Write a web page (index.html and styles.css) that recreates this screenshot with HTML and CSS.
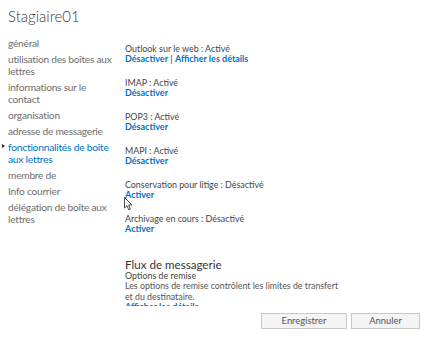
FILE: index.html
```html
<!DOCTYPE html>
<html lang="fr">
<head>
    <meta charset="UTF-8">
    <meta name="viewport" content="width=device-width, initial-scale=1.0">
    <title>Stagiaire01</title>
    <link rel="stylesheet" href="styles.css">
</head>
<body>

<div class="dialog">
    <!-- Header -->
    <h1 class="title">Stagiaire01</h1>

    <div class="main">
        <!-- Left navigation -->
        <ul class="nav">
            <li>général</li>
            <li>utilisation des boîtes aux lettres</li>
            <li>informations sur le contact</li>
            <li>organisation</li>
            <li>adresse de messagerie</li>
            <li class="selected">fonctionnalités de boîte aux lettres</li>
            <li>membre de</li>
            <li>Info courrier</li>
            <li>délégation de boîte aux lettres</li>
        </ul>

        <!-- Feature list -->
        <div class="content">
            <div class="feature">
                <div class="label">Outlook sur le web : Activé</div>
                <div class="links"><a>Désactiver</a> <span class="sep">|</span> <a>Afficher les détails</a></div>
            </div>
            <div class="feature">
                <div class="label">IMAP : Activé</div>
                <div class="links"><a>Désactiver</a></div>
            </div>
            <div class="feature">
                <div class="label">POP3 : Activé</div>
                <div class="links"><a>Désactiver</a></div>
            </div>
            <div class="feature">
                <div class="label">MAPI : Activé</div>
                <div class="links"><a>Désactiver</a></div>
            </div>
            <div class="feature">
                <div class="label">Conservation pour litige : Désactivé</div>
                <div class="links"><a>Activer</a></div>
            </div>
            <div class="feature">
                <div class="label">Archivage en cours : Désactivé</div>
                <div class="links"><a>Activer</a></div>
            </div>

            <div class="section">
                <h2>Flux de messagerie</h2>
                <div class="label">Options de remise</div>
                <p>Les options de remise contrôlent les limites de transfert et du destinataire.</p>
                <div class="links"><a>Afficher les détails</a></div>
            </div>
        </div>
    </div>

    <!-- Buttons -->
    <div class="footer">
        <button>Enregistrer</button>
        <button>Annuler</button>
    </div>

    <!-- Mouse pointer -->
    <svg class="cursor" width="9" height="14" viewBox="0 0 9 14">
        <path d="M0.5 0.5 L0.5 11 L3 8.6 L4.8 12.8 L6.4 12.1 L4.6 8 L8 8 Z" fill="#fff" stroke="#333" stroke-width="0.9" stroke-linejoin="round"/>
    </svg>
</div>

</body>
</html>
```

FILE: styles.css
```css
body {
    margin: 0;
    padding: 0;
    background-color: #fff;
    font-family: 'Lato', 'Open Sans', sans-serif;
    color: #333;
}

.dialog {
    position: relative;
    width: 427px;
    height: 339px;
    display: flex;
    flex-direction: column;
    overflow: hidden;
}

/* Header */
.title {
    margin: 0;
    padding: 6px 0 0 8px;
    height: 29px;
    font-size: 15px;
    font-weight: 300;
    line-height: 20px;
    color: #3a3a3a;
}

.main {
    display: flex;
    height: 271px;
    flex-shrink: 0;
    overflow: hidden;
}

/* Left navigation */
.nav {
    list-style: none;
    margin: 0;
    padding: 0 0 0 8px;
    width: 110px;
    flex-shrink: 0;
}

.nav li {
    position: relative;
    padding: 2px 0;
    font-size: 10.2px;
    line-height: 12px;
    color: #6e6e6e;
    letter-spacing: -0.25px;
}

.nav li.selected {
    color: #0072c6;
    font-size: 10.3px;
}

.nav li.selected::before {
    content: "";
    position: absolute;
    left: -6px;
    top: 5px;
    border-left: 3px solid #333;
    border-top: 2.5px solid transparent;
    border-bottom: 2.5px solid transparent;
}

/* Feature list */
.content {
    padding: 9px 0 0 7px;
    flex: 1;
}

.feature {
    margin-bottom: 14px;
}

.label {
    font-size: 8.9px;
    line-height: 10px;
    color: #444;
}

.links {
    font-size: 9px;
    line-height: 10px;
}

.links a {
    color: #0072c6;
    font-weight: 700;
}

.sep {
    color: #333;
}

.section {
    margin-top: 24px;
}

.section h2 {
    margin: 0;
    font-size: 11.6px;
    font-weight: 400;
    line-height: 13px;
    color: #333;
}

.section p {
    margin: 0;
    width: 221px;
    font-size: 8.8px;
    line-height: 10.5px;
    color: #555;
}

/* Buttons */
.footer {
    display: flex;
    justify-content: flex-end;
    gap: 4px;
    padding: 7px 7px 0 0;
}

.footer button {
    width: 86px;
    height: 16px;
    padding: 0;
    background-color: #f4f4f4;
    border: 1px solid #c8c8c8;
    font-family: 'Lato', 'Open Sans', sans-serif;
    font-size: 9.4px;
    line-height: 14px;
    color: #555;
}

.footer button:last-child {
    width: 69px;
}

.cursor {
    position: absolute;
    left: 124px;
    top: 197px;
}
```
